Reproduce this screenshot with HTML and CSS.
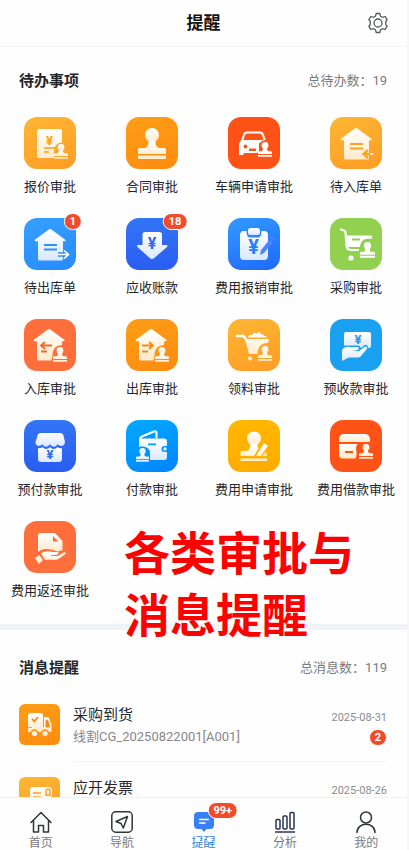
FILE: index.html
```html
<!DOCTYPE html>
<html lang="zh-CN">
<head>
  <meta charset="UTF-8" />
  <meta name="viewport" content="width=device-width, initial-scale=1.0" />
  <title>提醒</title>
  <link rel="stylesheet" href="styles.css">
</head>
<body>
  <!-- shared gradients and shapes -->
  <svg class="defs" width="0" height="0" aria-hidden="true">
    <defs>
      <linearGradient id="cream" x1="0" y1="0" x2="0" y2="1"><stop offset="0" stop-color="#fff" /><stop offset="1" stop-color="#ffeacb" /></linearGradient>
      <linearGradient id="ice" x1="0" y1="0" x2="0" y2="1"><stop offset="0" stop-color="#fff" /><stop offset="1" stop-color="#d9e8ff" /></linearGradient>
      <symbol id="stamp" viewBox="0 0 14 15">
        <circle cx="7" cy="3.4" r="3.4" />
        <path d="M5 5.5h4c-.2 2 .4 3.2 1.6 3.7H13a1 1 0 0 1 1 1V12H0v-1.8a1 1 0 0 1 1-1h2.400C4.600 8.700 5.200 7.500 5 5.500zM0 13h14v1.800H0z" />
      </symbol>
      <symbol id="house" viewBox="0 0 52 52">
        <path d="M25.200 11.300a1.500 1.500 0 0 1 1.800 0L41 21.500c1 .8.600 1.700-.5 1.700H39V41a1.500 1.500 0 0 1-1.500 1.500h-22A1.500 1.500 0 0 1 14 41V23.200h-2.300c-1.200 0-1.500-1-.5-1.700z" />
      </symbol>
    </defs>
  </svg>

  <header class="topbar">
    <h1>提醒</h1>
    <button class="settings" aria-label="设置">
      <svg viewBox="0 0 22 22" width="22" height="22" fill="none" stroke="#555960" stroke-width="1.300" stroke-linejoin="round">
        <path d="M9.200 1.500h3.600l.7 2.700 2 1.100 2.700-.8 1.900 3.200-1.300 1.500v3.600l1.300 1.500-1.900 3.200-2.700-.8-2 1.100-.7 2.700H9.200l-.7-2.700-2-1.100-2.700.8-1.900-3.200 1.300-1.500V9.200L1.900 7.700l1.900-3.200 2.700.8 2-1.100z" />
        <circle cx="11" cy="11" r="4" />
      </svg>
    </button>
  </header>

  <main>
    <section class="todo">
      <div class="section-head">
        <h2>待办事项</h2>
        <span>总待办数：19</span>
      </div>
      <div class="grid">
        <a class="item" href="#">
          <span class="icon amber">
            <svg viewBox="0 0 52 52" fill="url(#cream)">
              <rect x="13" y="12" width="25" height="29" rx="2" />
              <text x="25.500" y="28" class="yen" fill="#f99e1c">¥</text>
              <path d="M20 31h11M20 35h5" stroke="#f99e1c" stroke-width="1.500" />
              <path d="M38.500 25.500a8 8 0 0 0-8.500 8V42h9z" fill="#fda629" />
              <use href="#stamp" x="30" y="27" width="14" height="15" />
            </svg>
          </span>
          <span class="label">报价审批</span>
        </a>
        <a class="item" href="#">
          <span class="icon orange">
            <svg viewBox="0 0 52 52" fill="url(#cream)">
              <circle cx="26" cy="18" r="7" />
              <path d="M22.500 23h7c0 4 .7 7 3.500 8h5.500a1.500 1.500 0 0 1 1.500 1.500V37H12v-4.500a1.500 1.500 0 0 1 1.500-1.500H19c2.800-1 3.500-4 3.500-8zM12 38.500h28V42H12z" />
            </svg>
          </span>
          <span class="label">合同审批</span>
        </a>
        <a class="item" href="#">
          <span class="icon red">
            <svg viewBox="0 0 52 52" fill="#fff">
              <path d="M14 24l2-6c.5-1.800 1.500-2.500 3-2.500h13c1.500 0 2.500.7 3 2.500l2 6" fill="none" stroke="#fff" stroke-width="2" />
              <path fill-rule="evenodd" d="M13 23h25l-1 3H31v8l-2 2H15.500v2H11V27zM17.500 27.500a2 2 0 1 0 0 4 2 2 0 0 0 0-4zM21 31.500V34h7v-2.500z" />
              <circle cx="37" cy="28.500" r="5.500" fill="#ff5317" />
              <use href="#stamp" x="30" y="25" width="14" height="15" />
            </svg>
          </span>
          <span class="label">车辆申请审批</span>
        </a>
        <a class="item" href="#">
          <span class="icon amber">
            <svg viewBox="0 0 52 52" fill="url(#cream)">
              <use href="#house" width="52" height="52" />
              <path d="M20 27h13M20 31.500h13" stroke="#fba523" stroke-width="2" />
              <path d="M40 37h-6m4-4l-4.500 4 4.500 4" fill="none" stroke="#fba523" stroke-width="2.500" />
              <path d="M40 37h3.500" stroke="#fff" stroke-width="1.500" />
            </svg>
          </span>
          <span class="label">待入库单</span>
        </a>
        <a class="item" href="#">
          <span class="icon sky">
            <svg viewBox="0 0 52 52" fill="url(#ice)">
              <use href="#house" width="52" height="52" />
              <path d="M20 27h13M20 31.500h13" stroke="#318ff8" stroke-width="2" />
              <path d="M34 36.500h10m-4-4l4.500 4-4.500 4" fill="none" stroke="#318ff8" stroke-width="4.500" />
              <path d="M34 36.500h10m-4-4l4.500 4-4.500 4" fill="none" stroke="#fff" stroke-width="1.600" />
            </svg>
            <b class="badge">1</b>
          </span>
          <span class="label">待出库单</span>
        </a>
        <a class="item" href="#">
          <span class="icon royal">
            <svg viewBox="0 0 52 52" fill="url(#ice)">
              <path d="M19 14h14.500a2.500 2.500 0 0 1 2.500 2.500V27h4c1.500 0 2 1 1 2L28 40.200a3 3 0 0 1-4 0L11.500 29c-1-1-.5-2 1-2H16.500V16.500A2.500 2.500 0 0 1 19 14z" />
              <text x="26" y="31" class="yen big" fill="#2c68f2">¥</text>
            </svg>
            <b class="badge">18</b>
          </span>
          <span class="label">应收账款</span>
        </a>
        <a class="item" href="#">
          <span class="icon blue">
            <svg viewBox="0 0 52 52" fill="url(#ice)">
              <path d="M16 13h2.500c0 4 1 6.500 3.500 6.500h8c2.500 0 3.500-2.500 3.500-6.500H36a4 4 0 0 1 4 4v21a4 4 0 0 1-4 4H16a4 4 0 0 1-4-4V17a4 4 0 0 1 4-4z" />
              <rect x="20" y="10" width="12" height="7" rx="2.500" />
              <text x="25.500" y="36" class="yen huge" fill="#2b82f8">¥</text>
              <path d="M41.500 21.500l3.500 2.500-9 11-4 2 .8-4.500zM42.500 20l1.300-1.200 2.700 2-1 1.600z" fill="#4a86fa" />
            </svg>
          </span>
          <span class="label">费用报销审批</span>
        </a>
        <a class="item" href="#">
          <span class="icon green">
            <svg viewBox="0 0 52 52" fill="#fff">
              <path d="M11 11.500l3 1c1.500.5 1.500 1.500 1.600 3l.9 11.500c.2 3 1.500 5 4.500 5h7" fill="none" stroke="#fff" stroke-width="2.200" stroke-linecap="round" />
              <path fill-rule="evenodd" d="M16 17.500h25c1.500 0 1.500 2 .5 3.200h-4c-5 0-7 4-7.500 8.300H18zM22 20.500v2h8v-2z" />
              <circle cx="21" cy="40" r="2.600" />
              <use href="#stamp" x="30" y="24" width="15" height="16" />
            </svg>
          </span>
          <span class="label">采购审批</span>
        </a>
        <a class="item" href="#">
          <span class="icon coral">
            <svg viewBox="0 0 52 52" fill="url(#cream)">
              <use href="#house" x="-1" y="-1" width="52" height="52" />
              <path d="M28 26.500H17m4-3.500l-4 3.500 4 3.500M17 32.500h6" fill="none" stroke="#f9642f" stroke-width="1.800" />
              <path d="M39 26c-7 0-10.500 4-10.500 10l-1 6.500H39z" fill="#ff6f3c" />
              <use href="#stamp" x="29" y="28" width="14" height="15" />
            </svg>
          </span>
          <span class="label">入库审批</span>
        </a>
        <a class="item" href="#">
          <span class="icon orange">
            <svg viewBox="0 0 52 52" fill="url(#cream)">
              <use href="#house" x="-1" y="-1" width="52" height="52" />
              <path d="M16 26.500h11m-4-3.500l4 3.500-4 3.500M16 32.500h6" fill="none" stroke="#f78a10" stroke-width="1.800" />
              <path d="M39 26c-7 0-10.500 4-10.500 10l-1 6.500H39z" fill="#fd9514" />
              <use href="#stamp" x="29" y="28" width="14" height="15" />
            </svg>
          </span>
          <span class="label">出库审批</span>
        </a>
        <a class="item" href="#">
          <span class="icon amber">
            <svg viewBox="0 0 52 52" fill="url(#cream)">
              <path d="M9 17h6.500l3 4" fill="none" stroke="#fff" stroke-width="2.400" stroke-linecap="round" />
              <path d="M20 18.500c1-3 3-2.500 4-2 1-3 3-3.500 4.500-1.500 2-3 4-2 4.500.5 2-1 3 .5 3 1.500 2 0 2.500.5 3 1.500zM17 20h24l-1 4c-6-.5-10 3-10.500 11H21z" />
              <circle cx="22" cy="39.500" r="2" />
              <use href="#stamp" x="30" y="27" width="14" height="15" />
            </svg>
          </span>
          <span class="label">领料审批</span>
        </a>
        <a class="item" href="#">
          <span class="icon azure">
            <svg viewBox="0 0 52 52" fill="url(#ice)">
              <path d="M16 13h23a2 2 0 0 1 2 2v12a2 2 0 0 1-2 2h-1c0-3-2-4-4-2.500L31 29l-2-2.500H14V15a2 2 0 0 1 2-2z" />
              <text x="28" y="25" class="yen" fill="#1f97ed">¥</text>
              <path d="M12 31c2-3 5-3.500 8-3h7c2 0 2.500 2.500.5 3L23 32h6l5.500-4c2-1.500 3.500.5 2.300 2L31 37c-1 1.200-2 1.500-4 1.500h-8L12 42z" />
            </svg>
          </span>
          <span class="label">预收款审批</span>
        </a>
        <a class="item" href="#">
          <span class="icon royal">
            <svg viewBox="0 0 52 52" fill="url(#ice)">
              <path d="M17 13h19c2 0 3 1 3.500 2.500L41 22c0 4-5 5.500-7.200 2-2 3.500-6 3.500-7.800 0-2 3.500-6 3.500-7.800 0-2 3.500-7 2-6.700-2l2-6.500C14 14 15 13 17 13z" />
              <path d="M14 28c2 .5 3.500 0 4.500-1 2 2.500 5.500 2.500 7.500 0 2 2.500 5.500 2.500 7.500 0 1 1 2.500 1.500 4.500 1v11a3 3 0 0 1-3 3H17a3 3 0 0 1-3-3z" />
              <text x="26" y="39" class="yen" fill="#3265e6">¥</text>
            </svg>
          </span>
          <span class="label">预付款审批</span>
        </a>
        <a class="item" href="#">
          <span class="icon cyan">
            <svg viewBox="0 0 52 52" fill="url(#ice)">
              <path d="M14 24v-5c0-1.500.5-2 2-2.500l12-5c1.500-.6 2.500 0 2.500 1.500v5" fill="none" stroke="#fff" stroke-width="2" />
              <path fill-rule="evenodd" d="M15 18.500h23a3 3 0 0 1 3 3V26h-2.500a3 3 0 0 0 0 6H41v5a3 3 0 0 1-3 3H24v-8c-1-4-5-6.500-11-5v-6.500a2 2 0 0 1 2-2zM22 23.500v1.800h8v-1.800z" />
              <circle cx="39" cy="29" r="1.700" />
              <use href="#stamp" x="10" y="28" width="13" height="14" />
            </svg>
          </span>
          <span class="label">付款审批</span>
        </a>
        <a class="item" href="#">
          <span class="icon yellow">
            <svg viewBox="0 0 52 52" fill="url(#cream)">
              <circle cx="26" cy="18.500" r="7" />
              <path d="M22.500 23h7c-.2 3 0 4 1 5.500L26 36H12.500v-3a2 2 0 0 1 2-2H19c2.500-1 3.500-4 3.500-8zM36 23l4 2.800-7 10.200h-5zM37.500 31.500L39 36h-4.500zM12.500 38.500H39V41H12.500z" />
            </svg>
          </span>
          <span class="label">费用申请审批</span>
        </a>
        <a class="item" href="#">
          <span class="icon red">
            <svg viewBox="0 0 52 52" fill="url(#cream)">
              <path d="M14 14h21a5 5 0 0 1 5 5v3H9v-3a5 5 0 0 1 5-5z" />
              <path fill-rule="evenodd" d="M9 24h18.500c-2 3-1.500 5-1 8 .3 2 0 4-1 6.500H13a4 4 0 0 1-4-4zM15 31v2h8v-2z" />
              <use href="#stamp" x="29" y="24" width="14" height="15" />
            </svg>
          </span>
          <span class="label">费用借款审批</span>
        </a>
        <a class="item" href="#">
          <span class="icon coral">
            <svg viewBox="0 0 52 52" fill="url(#cream)">
              <path fill-rule="evenodd" d="M17 12h14l7.500 8v9l-4.500 1.500c-4-1.500-10-3-13-2.500-3 .3-5 1.500-7 3V15a3 3 0 0 1 3-3zm12 3v5.500h5.500z" />
              <path d="M11 37l4-3 4 5-4 4zM17 32.500c4-3 8-2.500 12-1.500h4c2 0 2 2.500 0 2.700l-6 .5v.8h7l5.500-3.500c1.800-.8 3 .5 1.800 1.800L35 37.500c-1 1-2 1.300-3.500 1.300H21z" />
            </svg>
          </span>
          <span class="label">费用返还审批</span>
        </a>
      </div>
      <p class="caption">各类审批与<br>消息提醒</p>
    </section>

    <section class="messages">
      <div class="section-head">
        <h2>消息提醒</h2>
        <span>总消息数：119</span>
      </div>
      <a class="message" href="#">
        <svg class="thumb orange" viewBox="0 0 41 41" fill="url(#cream)">
          <path d="M12 9h9a3 3 0 0 1 3 3v14H9V12a3 3 0 0 1 3-3zM25 13h3c1.500 0 2 .7 2.500 2l2 5.500V28H9v-5h16z" />
          <path d="M13 15l2.500 2.500L19 13" fill="none" stroke="#f98b14" stroke-width="1.800" />
          <path d="M27 16h1.500l2 5.500v1.500H27zM9 23.500h4" fill="#f98b14" stroke="#f98b14" stroke-width=".8" />
          <circle cx="15.500" cy="29.500" r="3.400" stroke="#fb9317" stroke-width="1.600" />
          <circle cx="26" cy="29.500" r="3.400" stroke="#fb9317" stroke-width="1.600" />
        </svg>
        <div class="message-body">
          <div class="row"><h3>采购到货</h3><time>2025-08-31</time></div>
          <div class="row"><p>线割CG_20250822001[A001]</p><b class="badge inline">2</b></div>
        </div>
      </a>
      <a class="message" href="#">
        <svg class="thumb amber" viewBox="0 0 41 41" fill="url(#cream)">
          <path d="M14 10h15a4 4 0 0 1 4 4v4a2 2 0 0 1-2 2h-3v10H11V13a3 3 0 0 1 3-3z" />
          <path d="M14 16h8M14 20h8M27 19v-5c0-2 2-2 2-2 1.500 0 2 1 2 2v4h-4" fill="none" stroke="#f9a423" stroke-width="1.500" />
        </svg>
        <div class="message-body">
          <div class="row"><h3>应开发票</h3><time>2025-08-26</time></div>
        </div>
      </a>
    </section>
  </main>

  <nav class="tabbar">
    <a href="#">
      <svg viewBox="0 0 24 24" fill="none" stroke="#30343b" stroke-width="1.500" stroke-linejoin="round" stroke-linecap="round"><path d="M2 12.500L12 2.500l10 10M4.500 10.500V22h5v-6.500h5V22h5V10.500" /></svg>
      首页
    </a>
    <a href="#">
      <svg viewBox="0 0 24 24" fill="none" stroke="#30343b" stroke-width="1.500" stroke-linejoin="round"><rect x="1.800" y="1.800" width="20.400" height="20.400" rx="4" /><path d="M17.500 6.500L6 11.500l5 2 2.300 4.500z" /></svg>
      导航
    </a>
    <a class="active" href="#">
      <svg viewBox="0 0 24 24"><path d="M6 2h12a4 4 0 0 1 4 4v9a4 4 0 0 1-4 4h-3.500L12 22l-2.500-3H6a4 4 0 0 1-4-4V6a4 4 0 0 1 4-4z" fill="#3880fa" /><path d="M7.500 9.500h9M7.500 13h5.500" stroke="#fff" stroke-width="1.500" stroke-linecap="round" /></svg>
      <b class="badge">99+</b>
      提醒
    </a>
    <a href="#">
      <svg viewBox="0 0 24 24" fill="none" stroke="#2a3358" stroke-width="1.500"><rect x="3" y="9.500" width="4" height="9.500" rx="1" /><rect x="10" y="6" width="4" height="13" rx="1" /><rect x="17" y="2.500" width="4" height="16.500" rx="1" /><path d="M2 22h20" /></svg>
      分析
    </a>
    <a href="#">
      <svg viewBox="0 0 24 24" fill="none" stroke="#30343b" stroke-width="1.500" stroke-linecap="round"><circle cx="12" cy="7.500" r="5.500" /><path d="M3 22.500c0-11 18-11 18 0" /></svg>
      我的
    </a>
    <div class="dots"><i></i><i></i><i></i><i></i><i></i><i></i><i></i><i></i><i></i><i></i><i></i><i></i></div>
  </nav>
</body>
</html>
```
FILE: styles.css
```css
* {
  box-sizing: border-box;
}

body {
  display: flex;
  flex-direction: column;
  height: 100vh;
  margin: 0;
  overflow: hidden;
  background-color: #fefefe;
  border-right: 2px solid #f6f6f6;
  color: #25262b;
  font-family: Roboto, "Noto Sans CJK SC", sans-serif;
}

h1,
h2,
h3,
p {
  margin: 0;
}

a {
  color: inherit;
  text-decoration: none;
}

.defs {
  position: absolute;
}

.topbar {
  position: relative;
  display: flex;
  flex-shrink: 0;
  align-items: center;
  justify-content: center;
  height: 47px;
  border-bottom: 1px solid #f3f3f3;
}

.topbar h1 {
  font-size: 17px;
  line-height: 24px;
  color: #111;
}

.settings {
  position: absolute;
  right: 18px;
  top: 12px;
  padding: 0;
  border: none;
  background: none;
  cursor: pointer;
}

.settings svg {
  display: block;
}

main {
  flex: 1;
  min-height: 0;
  overflow: hidden;
}

.section-head {
  display: flex;
  align-items: center;
  justify-content: space-between;
  padding: 0 20px 0 19px;
  height: 24px;
}

.section-head h2 {
  font-size: 15px;
  line-height: 24px;
}

.section-head span {
  font-size: 13px;
  line-height: 24px;
  color: #7b7b7d;
}

.todo {
  position: relative;
  padding: 22px 0 2px;
  border-bottom: 6px solid #f0f4f9;
}

.grid {
  display: grid;
  grid-template-columns: repeat(4, 1fr);
  grid-auto-rows: 101px;
  margin: 24px 0 0 -1px;
}

.item {
  display: flex;
  flex-direction: column;
  align-items: center;
  gap: 8px;
}

.label {
  font-size: 13px;
  line-height: 20px;
  white-space: nowrap;
}

.icon {
  position: relative;
  width: 52px;
  height: 52px;
  border-radius: 13px;
}

.icon svg {
  display: block;
  width: 100%;
  height: 100%;
}

.yen {
  font-family: Roboto, sans-serif;
  font-size: 13px;
  font-weight: 700;
  text-anchor: middle;
}

.yen.big {
  font-size: 16px;
}

.yen.huge {
  font-size: 20px;
}

.amber {
  background: linear-gradient(160deg, #fdb634, #ff9c24);
}

.orange {
  background: linear-gradient(160deg, #fd9d15, #ff8b10);
}

.red {
  background: #ff5216;
}

.coral {
  background: #ff6e3b;
}

.yellow {
  background: linear-gradient(180deg, #ffb700, #ffac00);
}

.green {
  background: #92d050;
}

.sky {
  background: linear-gradient(160deg, #36a0ff, #268bff);
}

.blue {
  background: linear-gradient(160deg, #329aff, #1f69fb);
}

.royal {
  background: linear-gradient(180deg, #3475f6, #285df1);
}

.azure {
  background: #1aa0f1;
}

.cyan {
  background: linear-gradient(160deg, #00aaff, #0084ff);
}

.badge {
  position: absolute;
  top: -5px;
  left: 49px;
  min-width: 17px;
  height: 17px;
  padding: 0 5px;
  border: 1px solid #fff;
  border-radius: 9px;
  background: #f04c2b;
  color: #fff;
  font-size: 11px;
  font-weight: 700;
  line-height: 15px;
  text-align: center;
  transform: translateX(-50%);
}

.caption {
  position: absolute;
  top: 476px;
  left: 124px;
  color: #fe0000;
  font-size: 46px;
  font-weight: 700;
  line-height: 62px;
  white-space: nowrap;
}

.messages {
  padding-top: 26px;
}

.message {
  display: flex;
  gap: 13px;
  height: 73px;
  margin: 0 20px 0 19px;
}

.messages .section-head {
  margin-bottom: 24px;
}

.thumb {
  flex-shrink: 0;
  width: 41px;
  height: 41px;
  border-radius: 6px;
}

.message-body {
  flex: 1;
  height: 58px;
  border-bottom: 1px solid #f3f3f3;
}

.row {
  display: flex;
  align-items: center;
  justify-content: space-between;
  height: 22px;
}

.message h3 {
  font-size: 15px;
  font-weight: 400;
  line-height: 22px;
}

.message p {
  color: #85868a;
  font-size: 13px;
  line-height: 22px;
}

.message time {
  padding-top: 4px;
  color: #8b8c90;
  font-size: 11px;
}

.badge.inline {
  position: static;
  transform: none;
}

.tabbar {
  position: relative;
  display: flex;
  flex-shrink: 0;
  padding-top: 12px;
  border-top: 1px solid #f1f1f1;
  background: #fefefe;
}

.tabbar a {
  position: relative;
  display: flex;
  flex: 1;
  flex-direction: column;
  align-items: center;
  gap: 2px;
  color: #77797e;
  font-size: 12px;
  line-height: 14px;
}

.tabbar svg {
  width: 24px;
  height: 24px;
}

.tabbar .active {
  color: #3880d8;
}

.tabbar .badge {
  top: -8px;
  left: 60px;
}

/* page indicator lying over the tab labels */
.dots {
  position: absolute;
  right: 0;
  bottom: 8px;
  left: 0;
  display: flex;
  justify-content: center;
  gap: 7px;
}

.dots i {
  width: 5px;
  height: 5px;
  border-radius: 50%;
  background: #fff;
  box-shadow: 0 0 3px rgba(0, 0, 0, 0.04);
}
```
